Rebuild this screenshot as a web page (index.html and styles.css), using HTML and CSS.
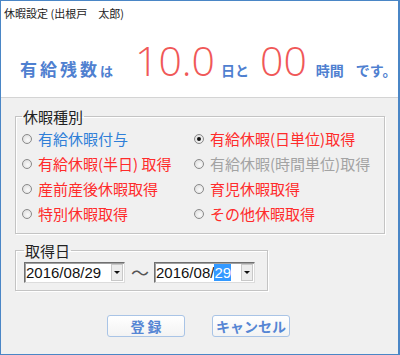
FILE: index.html
```html
<!DOCTYPE html>
<html lang="ja">
<head>
<meta charset="utf-8">
<title>休暇設定</title>
<link rel="stylesheet" href="styles.css">
</head>
<body>
<div class="window">
  <header class="head">
    <div class="title">休暇設定 (出根戸　太郎)</div>
    <div class="summary">
      <span class="lbl big">有給残数</span><span class="lbl ha">は</span>
      <span class="num n1">10.0</span>
      <span class="lbl u1">日と</span>
      <span class="num n2">00</span>
      <span class="lbl u2">時間</span>
      <span class="lbl u3">です。</span>
    </div>
  </header>
  <main class="body">
    <fieldset class="group kinds">
      <legend>休暇種別</legend>
      <div class="radios">
        <div class="radio blue"><span class="dot"></span>有給休暇付与</div>
        <div class="radio red"><span class="dot on"></span>有給休暇(日単位)取得</div>
        <div class="radio red"><span class="dot"></span>有給休暇(半日) 取得</div>
        <div class="radio gray"><span class="dot"></span>有給休暇(時間単位)取得</div>
        <div class="radio red"><span class="dot"></span>産前産後休暇取得</div>
        <div class="radio red"><span class="dot"></span>育児休暇取得</div>
        <div class="radio red"><span class="dot"></span>特別休暇取得</div>
        <div class="radio red"><span class="dot"></span>その他休暇取得</div>
      </div>
    </fieldset>
    <fieldset class="group dates">
      <legend>取得日</legend>
      <div class="daterow">
        <div class="datebox"><span class="dtext">2016/08/29</span><span class="drop"><span class="tri"></span></span></div>
        <span class="tilde">～</span>
        <div class="datebox"><span class="dtext">2016/08/<span class="sel">29</span></span><span class="drop"><span class="tri"></span></span></div>
      </div>
    </fieldset>
    <div class="buttons">
      <button class="btn">登 録</button>
      <button class="btn">キャンセル</button>
    </div>
  </main>
</div>
</body>
</html>
```
FILE: styles.css
```css
html, body {
  margin: 0;
  padding: 0;
}
body {
  font-family: "Noto Sans CJK JP", "Noto Sans", sans-serif;
  background: #f0f0f0;
}
.window {
  width: 400px;
  height: 355px;
  box-sizing: border-box;
  border: 1px solid #4a86c6;
  border-right-width: 2px;
  background: #f0f0f0;
  overflow: hidden;
}
.head {
  height: 96px;
  background: #fff;
  border-bottom: 1px solid #d4d4d4;
}
.title {
  font-size: 11px;
  line-height: 14px;
  color: #222;
  padding: 5px 0 0 3px;
}
.summary {
  display: flex;
  align-items: baseline;
  margin-top: 20px;
  padding-left: 19px;
  color: #4f80d0;
  white-space: nowrap;
}
.summary > span {
  flex: none;
}
.lbl {
  font-weight: bold;
  font-size: 14px;
}
.big {
  font-size: 17px;
  letter-spacing: 3px;
}
.ha {
  font-size: 13px;
}
.num {
  font-family: "Open Sans", Roboto, "Liberation Sans", sans-serif;
  font-weight: 300;
  font-size: 41px;
  line-height: 1;
  color: #f05858;
  letter-spacing: 0;
}
.n1 {
  margin-left: 22px;
}
.u1 {
  margin-left: 6px;
}
.n2 {
  margin-left: 11px;
}
.u2 {
  margin-left: 9px;
}
.u3 {
  margin-left: 12px;
}
.body {
  padding: 11px 0 0 14px;
}
.group {
  box-sizing: border-box;
  margin: 0;
  border: 1px solid #c4c4c4;
  box-shadow: inset 1px 1px 0 #fff, 1px 1px 0 #fff;
  min-width: 0;
}
.group legend {
  font-size: 15px;
  line-height: 15px;
  padding: 0 1px;
  color: #222;
}
.kinds {
  width: 370px;
  padding: 2px 6px 7px 6px;
}
.radios {
  display: grid;
  grid-template-columns: 172px 1fr;
  grid-auto-rows: 25px;
}
.radio {
  display: flex;
  align-items: center;
  font-size: 15px;
  gap: 6px;
  white-space: nowrap;
}
.blue { color: #2f7fd8; }
.red { color: #ff2b2b; }
.gray { color: #a3a3a3; }
.dot {
  width: 8px;
  height: 8px;
  border-radius: 50%;
  border: 1px solid #8a8a8a;
  background: radial-gradient(circle at 60% 60%, #fbfbfb 0, #e6e6e6 60%, #cfcfcf 100%);
  position: relative;
  flex: none;
}
.dot.on::after {
  content: "";
  position: absolute;
  left: 2px;
  top: 2px;
  width: 4px;
  height: 4px;
  border-radius: 50%;
  background: #111;
}
.dates {
  width: 253px;
  margin-top: 9px;
  padding: 4px 8px 7px 8px;
}
.daterow {
  display: flex;
  align-items: center;
}
.datebox {
  box-sizing: border-box;
  width: 101px;
  height: 21px;
  display: flex;
  align-items: center;
  justify-content: space-between;
  background: #fff;
  border: 1px solid;
  border-color: #707070 #dcdcdc #dcdcdc #707070;
  box-shadow: inset 1px 1px 0 #a0a0a0;
  padding-left: 1px;
}
.dtext {
  font-family: "Liberation Sans", Arial, sans-serif;
  font-size: 15px;
  color: #111;
  line-height: 17px;
}
.sel {
  background: #3399ff;
  color: #fff;
}
.drop {
  width: 12px;
  height: 17px;
  margin-right: 1px;
  background: #ececec;
  border: 1px solid #c8c8c8;
  box-sizing: border-box;
  display: flex;
  align-items: center;
  justify-content: center;
}
.tri {
  width: 0;
  height: 0;
  border-left: 3px solid transparent;
  border-right: 3px solid transparent;
  border-top: 3px solid #111;
}
.tilde {
  font-size: 18px;
  color: #555;
  margin: 0 5px 0 6px;
  line-height: 21px;
}
.buttons {
  display: flex;
  gap: 27px;
  margin: 24px 0 0 92px;
}
.btn {
  width: 78px;
  height: 22px;
  border: 1px solid #a9c4e6;
  border-radius: 3px;
  background: linear-gradient(#ffffff, #f3f3f3);
  font-family: "Noto Sans CJK JP", sans-serif;
  font-weight: bold;
  font-size: 14px;
  color: #5686d4;
  padding: 0;
  line-height: 18px;
}
```
